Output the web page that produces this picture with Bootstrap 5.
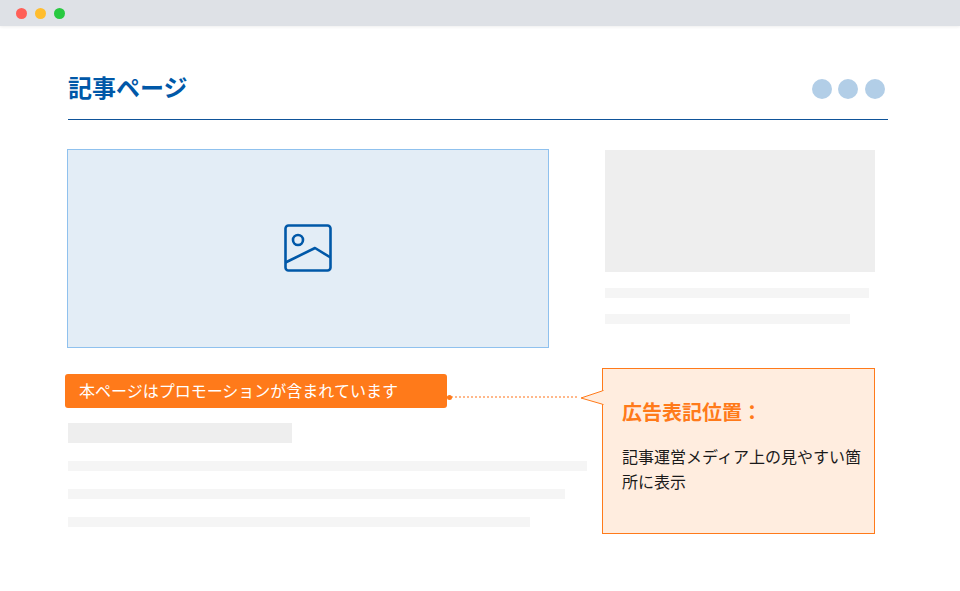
<!doctype html>
<html lang="ja">
<head>
<meta charset="utf-8">
<title>広告表記位置</title>
<link href="https://cdn.jsdelivr.net/npm/bootstrap@5.3.0/dist/css/bootstrap.min.css" rel="stylesheet">
<style>
html,body{height:591px;overflow:hidden;background:#fff;}
body{font-family:"Noto Sans CJK JP","Liberation Sans",sans-serif;color:#1a1a1a;}
.chrome-bar{height:26px;background:#dee1e6;padding-left:16px;gap:8px;box-shadow:0 1px 3px rgba(0,0,0,.07);}
.chrome-dot{width:11px;height:11px;border-radius:50%;}
.dot-r{background:#ff5f57;}.dot-y{background:#ffbd2e;}.dot-g{background:#28c940;}
.mock-wrap{width:820px;margin-left:68px;}
.mock-head{height:94px;padding-top:53px;border-bottom:1px solid #0f5499;align-items:flex-start;justify-content:space-between;}
.mock-title{margin:-1px 0 0;font-size:24px;line-height:18px;font-weight:700;color:#0058a8;}
.head-dots{gap:6px;padding-right:3px;}
.head-dot{width:20px;height:20px;border-radius:50%;background:#b2cee7;}
.head-dot:last-child{margin-left:1px;}
.mock-body{padding-top:29px;}
.left-col{width:537px;}
.right-col{margin-left:0;width:270px;}
.hero-box{width:482px;height:199px;margin-left:-1px;background:#e3edf6;border:1px solid #8fc1ee;}
.hero-icon{margin-bottom:2px;}
.promo-bar{position:relative;width:382px;height:34px;margin:26px 0 15px -3px;padding-left:14px;background:#ff7a1a;color:#fff;font-size:16px;line-height:32px;border-radius:3px;white-space:nowrap;}
.promo-link{position:absolute;left:382px;top:22px;width:130px;border-top:2px dotted #ffb88a;}
.promo-link::before{content:"";position:absolute;left:0;top:-3.5px;width:5px;height:5px;border-radius:50%;background:#ff7a1a;}
.bar-g{background:#f5f5f5;height:10px;}
.bar-h{background:#eee;width:224px;height:20px;margin-bottom:18px;}
.w-519{width:519px;margin-bottom:18px;}.w-497{width:497px;margin-bottom:18px;}.w-462{width:462px;}
.side-img{background:#eee;height:122px;margin-top:1px;margin-bottom:16px;}
.w-264{width:264px;margin-bottom:16px;}.w-245{width:245px;}
.callout{position:relative;width:273px;height:166px;margin:44px 0 0 -3px;padding:30px 10px 0 19px;background:#ffeddf;border:1px solid #ff7a1a;}
.callout svg{position:absolute;left:-23px;top:18px;}
.callout-title{margin:0 0 19px;font-size:20px;line-height:26px;font-weight:700;color:#ff7a1a;}
.callout-text{margin:0;font-size:16px;line-height:25px;color:#1a1a1a;}
</style>
</head>
<body>
<div class="chrome-bar d-flex align-items-center">
  <span class="chrome-dot dot-r"></span><span class="chrome-dot dot-y"></span><span class="chrome-dot dot-g"></span>
</div>
<main class="mock-wrap">
  <header class="mock-head d-flex">
    <h1 class="mock-title">記事ページ</h1>
    <div class="head-dots d-flex"><span class="head-dot"></span><span class="head-dot"></span><span class="head-dot"></span></div>
  </header>
  <div class="mock-body d-flex">
    <div class="left-col">
      <div class="hero-box d-flex align-items-center justify-content-center">
        <svg class="hero-icon" width="48" height="48" viewBox="0 0 48 48" fill="none" stroke="#0058a8" stroke-width="2.6" stroke-linejoin="round" aria-hidden="true">
          <rect x="1.5" y="1.5" width="45" height="45" rx="3"/>
          <circle cx="14" cy="16" r="5"/>
          <path d="M1.5 38.5 L31 24 L46.5 33.5"/>
        </svg>
      </div>
      <div class="promo-bar">本ページはプロモーションが含まれています<span class="promo-link"></span></div>
      <div class="bar-h"></div>
      <div class="bar-g w-519"></div>
      <div class="bar-g w-497"></div>
      <div class="bar-g w-462"></div>
    </div>
    <div class="right-col">
      <div class="side-img"></div>
      <div class="bar-g w-264"></div>
      <div class="bar-g w-245"></div>
      <aside class="callout">
        <svg width="24" height="24" viewBox="0 0 24 24" aria-hidden="true"><path d="M23.5 3.5 L1 11 L23.5 17.5" fill="#ffeddf" stroke="#ff7a1a" stroke-width="1"/><rect x="22.6" y="4" width="2" height="13" fill="#ffeddf"/></svg>
        <h2 class="callout-title">広告表記位置：</h2>
        <p class="callout-text">記事運営メディア上の見やすい箇所に表示</p>
      </aside>
    </div>
  </div>
</main>
<script src="https://cdn.jsdelivr.net/npm/bootstrap@5.3.0/dist/js/bootstrap.bundle.min.js"></script>
</body>
</html>
